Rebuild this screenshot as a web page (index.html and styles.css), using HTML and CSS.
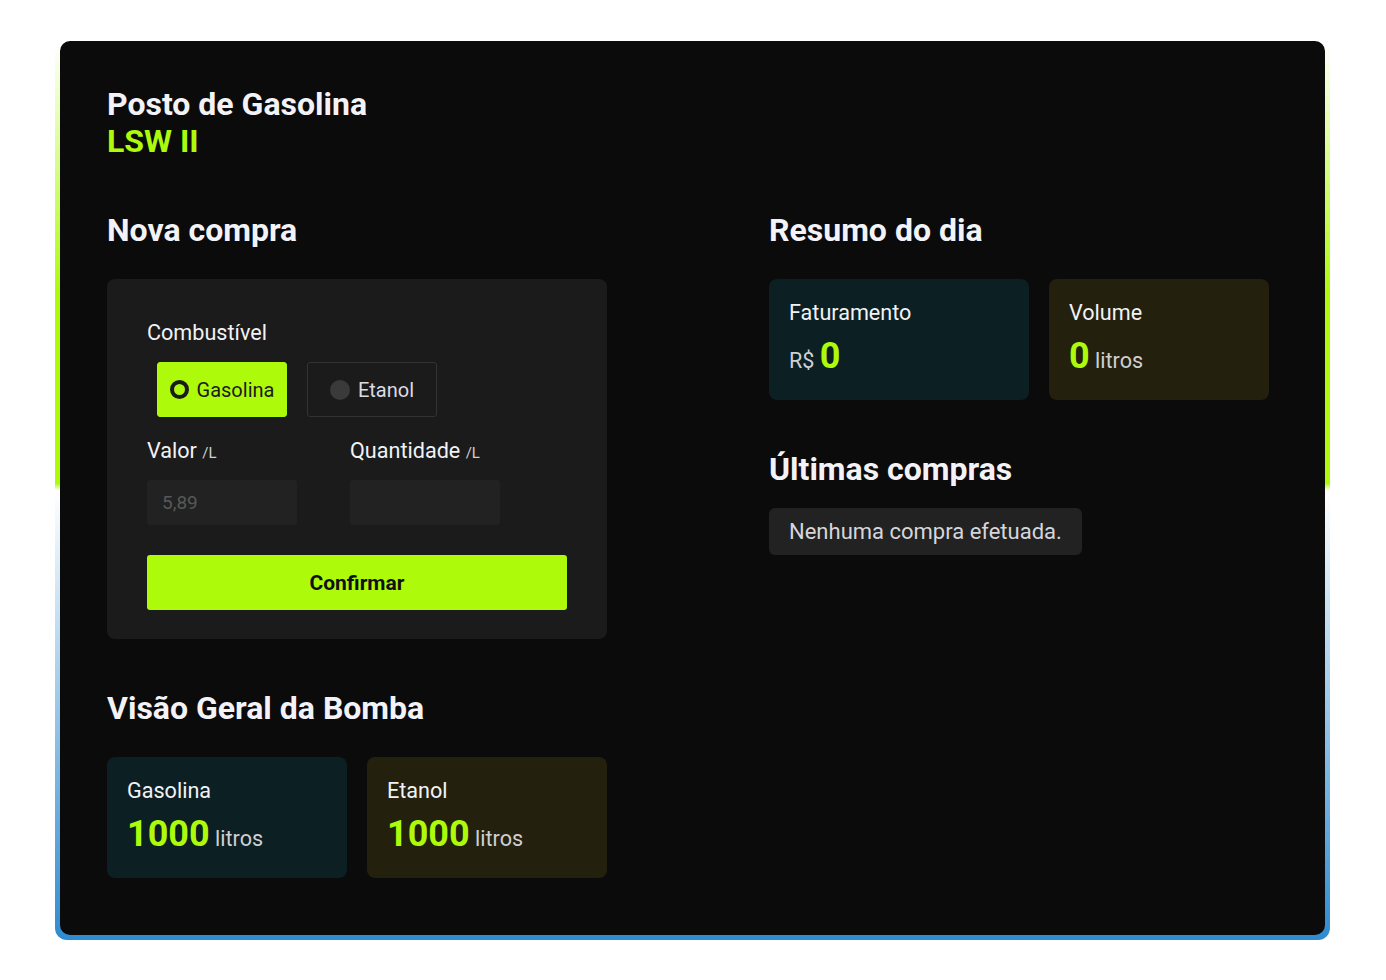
FILE: index.html
```html
<!DOCTYPE html>
<html lang="pt-BR">
<head>
<meta charset="utf-8">
<title>Posto de Gasolina LSW II</title>
<link rel="stylesheet" href="styles.css">
</head>
<body>
<div class="page">
  <div class="frame">
    <main class="card">
      <header class="brand">
        <h1 class="brand-title">Posto de Gasolina</h1>
        <div class="brand-sub">LSW II</div>
      </header>
      <div class="columns">
        <div class="col">
          <section class="section">
            <h2 class="section-title">Nova compra</h2>
            <form class="form">
              <div class="label">Combustível</div>
              <div class="options">
                <label class="option option-active"><span class="dot dot-active"></span><span>Gasolina</span></label>
                <label class="option"><span class="dot"></span><span>Etanol</span></label>
              </div>
              <div class="fields">
                <div class="field">
                  <div class="label">Valor <small class="unit">/L</small></div>
                  <div class="input"><span class="placeholder">5,89</span></div>
                </div>
                <div class="field">
                  <div class="label">Quantidade <small class="unit">/L</small></div>
                  <div class="input"></div>
                </div>
              </div>
              <div class="btn">Confirmar</div>
            </form>
          </section>
          <section class="section">
            <h2 class="section-title">Visão Geral da Bomba</h2>
            <div class="stats">
              <div class="stat stat-teal stat-pump">
                <div class="stat-label">Gasolina</div>
                <div class="stat-value"><b class="num">1000</b> <span class="muted">litros</span></div>
              </div>
              <div class="stat stat-olive stat-pump">
                <div class="stat-label">Etanol</div>
                <div class="stat-value"><b class="num">1000</b> <span class="muted">litros</span></div>
              </div>
            </div>
          </section>
        </div>
        <div class="col">
          <section class="section">
            <h2 class="section-title">Resumo do dia</h2>
            <div class="stats">
              <div class="stat stat-teal stat-wide">
                <div class="stat-label">Faturamento</div>
                <div class="stat-value"><span class="muted">R$</span> <b class="num">0</b></div>
              </div>
              <div class="stat stat-olive stat-narrow">
                <div class="stat-label">Volume</div>
                <div class="stat-value"><b class="num">0</b> <span class="muted">litros</span></div>
              </div>
            </div>
          </section>
          <section class="section">
            <h2 class="section-title section-title-tight">Últimas compras</h2>
            <div class="empty">Nenhuma compra efetuada.</div>
          </section>
        </div>
      </div>
    </main>
  </div>
</div>
</body>
</html>
```

FILE: styles.css
```css
* { box-sizing: border-box; }
html, body { margin: 0; padding: 0; background: #ffffff; }
body { font-family: Roboto, "Noto Sans", "Liberation Sans", sans-serif; color: #f2f2f6; }

.page { padding: 41px 56px 40px 55px; }

.frame {
  padding: 0 5px 5px 5px;
  border-radius: 12px;
  background: linear-gradient(180deg,
    rgba(173, 250, 11, 0) 0%,
    rgba(173, 250, 11, 1) 28%,
    rgba(173, 250, 11, 1) 49.2%,
    rgba(46, 139, 208, 0) 50%,
    rgba(46, 139, 208, 1) 100%);
}

.card {
  background: #0b0b0b;
  border-radius: 10px;
  padding: 45px 47px 57px 47px;
}

.brand-title, .section-title { margin: 0; font-weight: 700; font-size: 32px; line-height: 37px; color: #f3f3f7; }
.brand-sub { font-weight: 700; font-size: 32px; line-height: 37px; color: #adfa0b; }

.columns {
  display: grid;
  grid-template-columns: 500px 500px;
  column-gap: 162px;
  margin-top: 52px;
}

.section + .section { margin-top: 51px; }
.section-title { margin-bottom: 30px; }
.section-title-tight { margin-bottom: 20px; }

.form {
  background: #1b1b1b;
  border-radius: 8px;
  padding: 41px 40px 29px 40px;
}

.label { font-size: 21.6px; line-height: 26px; color: #f2f2f6; }
.unit { font-size: 15px; color: #cfcfd4; }

.options { display: flex; gap: 20px; padding: 0 10px; margin: 16px 0 21px; }
.option {
  width: 130px; height: 55px;
  display: flex; align-items: center; justify-content: center; gap: 8px;
  font-size: 20px; color: #dcdce0;
  border: 1px solid #333333; border-radius: 3px;
}
.option-active { background: #adfa0b; border-color: #adfa0b; color: #1b1b1b; }
.dot { width: 20px; height: 20px; border-radius: 50%; background: #3a3a3a; flex: none; }
.dot-active { background: transparent; border: 4px solid #1b1b1b; width: 19px; height: 19px; }

.fields { display: flex; gap: 53px; }
.field { width: 150px; }
.input {
  margin-top: 14px;
  height: 45px;
  background: #222222;
  border-radius: 3px;
  padding: 0 15px;
  display: flex; align-items: center;
  font-size: 19px;
}
.placeholder { color: #585858; }

.btn {
  margin-top: 30px;
  height: 55px;
  background: #adfa0b;
  border-radius: 3px;
  display: flex; align-items: center; justify-content: center;
  font-weight: 700; font-size: 21px; color: #111111;
}

.stats { display: flex; gap: 20px; }
.stat { height: 121px; border-radius: 8px; padding: 21px 20px 20px; }
.stat-teal { background: #0c1f23; }
.stat-olive { background: #23210d; }
.stat-pump { width: 240px; }
.stat-wide { width: 260px; }
.stat-narrow { width: 220px; }
.stat-label { font-size: 21.6px; line-height: 26px; color: #f2f2f6; }
.stat-value { margin-top: 8px; font-size: 21.6px; line-height: 44px; color: #cfcfd4; }
.num { font-weight: 700; font-size: 36px; color: #adfa0b; }
.muted { color: #cfcfd4; }

.empty {
  display: inline-block;
  background: #222222;
  border-radius: 6px;
  padding: 10px 20px;
  font-size: 22px; line-height: 27px;
  color: #d6d6da;
}
```
